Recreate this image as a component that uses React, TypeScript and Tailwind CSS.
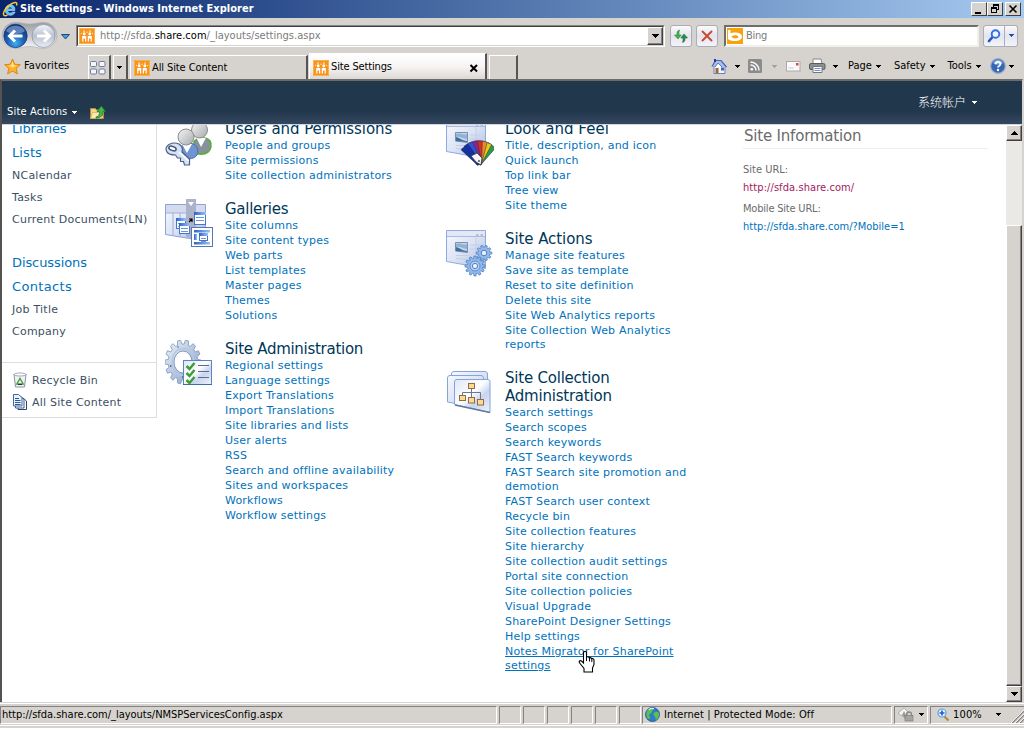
import React from 'react';

type Box = { className?: string };

const ui = "font-['DejaVu_Sans_Condensed','DejaVu_Sans',sans-serif] [font-stretch:condensed] whitespace-nowrap";
const bevel = 'bg-[#d6d3ce] border border-t-white border-l-white border-r-[#404040] border-b-[#404040]';
const sunken = 'border border-t-[#848284] border-l-[#848284] border-r-white border-b-white';

function Caret({ className = 'text-black' }: Box) {
  return (
    <svg width="5" height="3" viewBox="0 0 5 3" shapeRendering="crispEdges" className={'shrink-0 ' + className}>
      <path d="M0 0h5v1H4v1H3v1H2V2H1V1H0z" fill="currentColor" />
    </svg>
  );
}

function SiteLogo() {
  return (
    <svg width="16" height="16" viewBox="0 0 16 16" className="shrink-0">
      <rect width="16" height="16" rx="1" fill="#f7941d" />
      <rect x=".5" y=".5" width="15" height="15" rx="1" fill="none" stroke="#ffb04a" />
      <circle cx="5.200" cy="6" r="1.400" fill="#fff" />
      <circle cx="10.800" cy="6" r="1.400" fill="#fff" />
      <path d="M3.200 8h4v5.500H6v-3H4.400v3H3.200zM8.800 8h4v5.500h-1.200v-3H10v3H8.800z" fill="#fff" />
      <path d="M5 2v1.500M8 3.500v1.500M11 2v1.500M2 5.500h1M13 5.500h1M4 4h2M10 4h2" stroke="#ffe9c6" />
    </svg>
  );
}

function TitleBar() {
  return (
    <div className="flex h-[18px] w-full items-center bg-linear-to-r from-[#0a246a] to-[#a6caf0] pl-[2px] pr-[3px]">
      <svg width="16" height="16" viewBox="0 0 16 16" className="shrink-0">
        <path d="M12.800 9.500H5.600c.2 1.700 1.400 2.600 2.900 2.600 1 0 1.700-.4 2.100-1h2.500c-.7 2-2.400 3.200-4.700 3.200-3 0-5.200-2.100-5.200-5.200s2.200-5.300 5.200-5.300c3.200 0 4.900 2.500 4.400 5.700zM5.700 7.900h4.800c-.2-1.300-1.100-2-2.300-2-1.300 0-2.200.7-2.500 2z" fill="#55bdf5" stroke="#bfe9ff" strokeWidth=".6" />
        <path d="M14.500 4.500c.8-2.200.1-3.400-1.800-3C9.500 2 4.500 6 2.300 10c-1.300 2.500-1.100 4.600.6 4.800 1 .1 1.700-.2 2.600-.8" fill="none" stroke="#ffc92e" strokeWidth="1.500" />
      </svg>
      <span className={ui + ' ml-[2px] pt-px text-[11px] font-bold tracking-[0.02px] text-white'}>Site Settings - Windows Internet Explorer</span>
      <div className="ml-auto flex">
        <div className={bevel + ' h-[14px] w-4'}>
          <svg width="14" height="12" shapeRendering="crispEdges"><path d="M3 9h6v2H3z" /></svg>
        </div>
        <div className={bevel + ' h-[14px] w-4'}>
          <svg width="14" height="12" shapeRendering="crispEdges"><path d="M5 1h6v6H9v3H3V4h2zM6 3v1h3v2h1V3zM4 6v3h4V6z" fillRule="evenodd" /></svg>
        </div>
        <div className={bevel + ' ml-[2px] h-[14px] w-4'}>
          <svg width="14" height="12"><path d="M3.500 2.500l7 7M10.500 2.500l-7 7" stroke="#000" strokeWidth="1.600" /></svg>
        </div>
      </div>
    </div>
  );
}

function NavButtons() {
  return (
    <svg width="72" height="32" viewBox="0 0 72 32" className="shrink-0">
      <defs>
        <radialGradient id="nb" cx=".5" cy=".8" r=".8"><stop offset="0" stopColor="#3fb0f5" /><stop offset=".45" stopColor="#1f5fae" /><stop offset="1" stopColor="#0e2f76" /></radialGradient>
        <linearGradient id="nf" x1="0" y1="0" x2="0" y2="1"><stop offset="0" stopColor="#f2f5fa" /><stop offset=".5" stopColor="#b9c1d0" /><stop offset="1" stopColor="#e9eef5" /></linearGradient>
        <linearGradient id="nt" x1="0" y1="0" x2="0" y2="1"><stop offset="0" stopColor="#9a9ca3" /><stop offset="1" stopColor="#f5f5f5" /></linearGradient>
      </defs>
      <path d="M15 2.500C22 2.500 24 4 29.500 4S38 2.500 44 2.500a13 13 0 0 1 0 26c-6 0-9-2-14.500-2s-8 2-14.500 2a13 13 0 0 1 0-26z" fill="url(#nt)" stroke="#adadb3" strokeWidth=".7" />
      <circle cx="15.500" cy="16" r="11.700" fill="url(#nb)" stroke="#17377b" strokeWidth=".7" />
      <path d="M6 11c3-7 16-7 19 0-5 4-14 4-19 0z" fill="#7796cb" opacity=".75" />
      <path d="M22.500 16H10M15 10.500L9.500 16l5.500 5.500" fill="none" stroke="#fff" strokeWidth="3" />
      <circle cx="43.500" cy="16" r="11.500" fill="url(#nf)" stroke="#8f95a3" strokeWidth=".8" />
      <path d="M37 16h12M44 10.500l5.500 5.500-5.500 5.500" fill="none" stroke="#fff" strokeWidth="3" />
      <path d="M61.500 14.500h8l-4 4.500z" fill="#4a9cd6" stroke="#123c7a" strokeWidth=".9" />
    </svg>
  );
}

const navBtn = 'flex h-[22px] items-center justify-center rounded-[3px] border border-[#a9adb9] bg-linear-to-b from-[#fafafc] via-[#e3e4ee] to-[#f4f5fa]';

function AddressRow() {
  return (
    <div className="flex h-[35px] w-full items-center">
      <NavButtons />
      <div className="ml-[4px] flex h-[22px] w-[589px] border border-t-[#848284] border-l-[#848284] border-r-white border-b-white">
        <div className="flex flex-1 items-center border border-t-[#404040] border-l-[#404040] border-r-[#d6d3ce] border-b-[#d6d3ce] bg-white pl-px">
          <SiteLogo />
          <span className={ui + ' ml-[5px] pt-[2px] text-[11px] tracking-[0.02px] text-[#7b7b7b]'}>
            http://sfda.<span className="text-black">share.com</span>/_layouts/settings.aspx
          </span>
          <div className={bevel + ' ml-auto flex h-[18px] w-4 items-center justify-center shadow-[inset_-1px_-1px_0_#848284]'}>
            <svg width="7" height="4" shapeRendering="crispEdges"><path d="M0 0h7v1H6v1H5v1H4v1H3V3H2V2H1V1H0z" /></svg>
          </div>
        </div>
      </div>
      <div className={navBtn + ' ml-[5px] w-[22px]'}>
        <svg width="16" height="16" viewBox="0 0 16 16">
          <path d="M6.500 2C4 2.500 3.800 4.500 4 7H1.500L5 11l3.200-4H6c-.2-2 0-3.500.5-5z" fill="#42b24a" stroke="#1f7a2d" strokeWidth=".5" />
          <path d="M9.500 14.500c2.500-.5 2.700-2.500 2.500-4.500h2.500L11 6 7.800 10H10c.2 1.800 0 3-.5 4.500z" fill="#2c8f3a" stroke="#155f50" strokeWidth=".5" />
        </svg>
      </div>
      <div className={navBtn + ' ml-1 w-[22px]'}>
        <svg width="14" height="14" viewBox="0 0 14 14"><path d="M2.500 2.500l9 9M11.500 2.500l-9 9" stroke="#c94a35" strokeWidth="2" strokeLinecap="round" /></svg>
      </div>
      <div className="ml-[6px] flex h-[22px] w-[255px] items-center border-2 border-t-[#6d6d6d] border-l-[#6d6d6d] border-r-[#f0efec] border-b-[#f0efec] bg-white">
        <svg width="16" height="16" viewBox="0 0 16 16" className="ml-px shrink-0">
          <rect width="16" height="16" fill="#f7a30c" />
          <path d="M1 2h2.500v3.500C6 3.700 15 4 15 8.800S5 14.500 1 11zM4.500 8.800c1 2.200 7 2 7 0s-6-2.300-7 0z" fill="#fff" fillRule="evenodd" />
        </svg>
        <span className={ui + ' ml-[3px] pt-[2px] text-[11px] tracking-[-0.3px] text-[#7b7b7b]'}>Bing</span>
      </div>
      <div className={navBtn + ' ml-1 w-[22px] rounded-r-none'}>
        <svg width="16" height="16" viewBox="0 0 16 16">
          <path d="M7 8.500L3 13" stroke="#2453c0" strokeWidth="2.600" strokeLinecap="round" />
          <circle cx="9.500" cy="6" r="3.800" fill="#eaf4ff" stroke="#2f6fe0" strokeWidth="1.900" />
        </svg>
      </div>
      <div className={navBtn + ' w-[13px] rounded-l-none border-l-0'}><Caret className="text-[#1f4fb0]" /></div>
    </div>
  );
}

function ToolItem({ label, className }: { label: string; className: string }) {
  return (
    <div className={'flex items-center gap-1 ' + className}>
      <span className={ui + ' text-[11px] text-black'}>{label}</span>
      <Caret />
    </div>
  );
}

function TabRow() {
  return (
    <div className="flex h-[26px] w-full items-end">
      <div className="flex h-[26px] w-[88px] items-center pl-1">
        <svg width="17" height="17" viewBox="0 0 17 17">
          <path d="M8.500 1l2.200 5.200 5.600.5-4.200 3.700 1.300 5.500-4.900-2.900-4.900 2.900 1.300-5.500L.7 6.700l5.600-.5z" fill="#ffb42c" stroke="#e17c0a" strokeWidth=".9" />
          <path d="M8.500 3.500l1.500 3.700 3 .4-4.500 1.800-4-1.900 2.800-.3z" fill="#ffe58a" />
        </svg>
        <span className={ui + ' ml-[3px] text-[11px] tracking-[0.08px] text-black'}>Favorites</span>
      </div>
      <div className="flex h-6 w-[23px] items-center justify-center border-l border-t border-r-2 border-l-white border-t-white border-r-[#555] pr-[2px]">
        <svg width="16" height="14" viewBox="0 0 16 14" fill="#f4f6fb" stroke="#6f7b9b">
          <rect x=".5" y=".5" width="6" height="5" rx="1" /><rect x="9" y=".5" width="6" height="5" rx="1" />
          <rect x=".5" y="8" width="6" height="5" rx="1" /><rect x="9" y="8" width="6" height="5" rx="1" />
        </svg>
      </div>
      <div className="ml-[2px] flex h-6 w-[15px] items-center justify-center border-l border-t border-r-2 border-l-white border-t-white border-r-[#555] pr-[2px]"><Caret /></div>
      <div className="ml-[2px] flex h-6 w-[178px] items-center border-l border-t border-r-2 border-l-white border-t-white border-r-[#555] pl-[3px] pt-px">
        <SiteLogo />
        <span className={ui + ' ml-[2px] pt-px text-[11px] tracking-[-0.1px] text-black'}>All Site Content</span>
      </div>
      <div className="ml-px flex h-[26px] w-[178px] items-center border-l border-t border-r-2 border-l-white border-t-white border-r-[#555] bg-linear-to-b from-white via-[#f7f4f4] to-[#dcd8d4] pl-[3px] pr-[6px] pt-[2px]">
        <SiteLogo />
        <span className={ui + ' ml-[2px] text-[11px] tracking-[-0.15px] text-black'}>Site Settings</span>
        <svg width="10" height="10" viewBox="0 0 10 10" className="ml-auto"><path d="M1.500 2l6.500 6.500M8 2L1.500 8.500" stroke="#000" strokeWidth="2" /></svg>
      </div>
      <div className="ml-[2px] h-6 w-[29px] border-l border-t border-r-2 border-l-white border-t-white border-r-[#555]" />
      <div className="flex h-[26px] flex-1 items-center pl-[193px]">
        <svg width="17" height="17" viewBox="0 0 17 17">
          <path d="M3 8h11v7.500H3z" fill="#f4f4fb" stroke="#6c7fae" />
          <path d="M1 8.500L4.500 2.500h5.500L15.500 9" fill="#a8bde8" stroke="#4464b0" strokeWidth="1.200" />
          <path d="M3 1h2v3H3z" fill="#2338a8" />
          <path d="M4 9l3-4 4 4" fill="#fff" stroke="#5f78b8" />
          <rect x="4.500" y="10" width="3" height="5" fill="#9b6a3a" /><rect x="10" y="9.500" width="3" height="3" fill="#3d63c4" />
        </svg>
        <div className="ml-[7px]"><Caret /></div>
        <svg width="14" height="14" viewBox="0 0 14 14" className="ml-[8px]">
          <rect width="14" height="14" rx="1.500" fill="#8b8b8b" />
          <circle cx="3.800" cy="10.300" r="1.300" fill="#fff" />
          <path d="M2.500 6a5.500 5.500 0 0 1 5.500 5.500M2.500 3a8.500 8.500 0 0 1 8.500 8.500" fill="none" stroke="#fff" strokeWidth="1.400" />
        </svg>
        <div className="ml-[10px]"><Caret className="text-[#a3a09a]" /></div>
        <svg width="15" height="11" viewBox="0 0 15 11" className="ml-[9px]">
          <rect x=".5" y=".5" width="13.500" height="9.500" fill="#fafafa" stroke="#a9a9ad" /><path d="M2.500 7h5" stroke="#c7c7cc" /><rect x="10" y="2" width="2.500" height="2.500" fill="#d9493b" />
        </svg>
        <svg width="17" height="16" viewBox="0 0 17 16" className="ml-[8px]">
          <path d="M4 1h8l1 5H4z" fill="#fff" stroke="#888" />
          <rect x=".5" y="5.500" width="15.500" height="6" rx="1.500" fill="#8b8e94" stroke="#585c63" />
          <path d="M4 8.500h9V14.500H4z" fill="#fff" stroke="#777" /><path d="M5.500 10.500h6M5.500 12.500h6" stroke="#6d91cf" />
        </svg>
        <div className="ml-[7px]"><Caret /></div>
        <ToolItem label="Page" className="ml-[10px]" />
        <ToolItem label="Safety" className="ml-[13px]" />
        <ToolItem label="Tools" className="ml-[13px]" />
        <svg width="16" height="16" viewBox="0 0 16 16" className="ml-[9px]">
          <circle cx="8" cy="8" r="7.400" fill="#3567b5" stroke="#a3b1cc" strokeWidth="1.200" />
          <path d="M3 5c2-4 8-4 10 0-2 2-8 2-10 0z" fill="#89aede" />
          <path d="M5.700 6.200c0-3 4.800-3 4.800-.2C10.500 7.800 8 7.600 8 9.600" fill="none" stroke="#fff" strokeWidth="1.800" /><circle cx="8" cy="12" r="1.200" fill="#fff" />
        </svg>
        <div className="ml-[3px]"><Caret /></div>
      </div>
    </div>
  );
}

function Ribbon() {
  return (
    <div className="flex h-[44px] shrink-0 border-b border-[#cdd5e0] bg-linear-to-b from-[#21374c] from-70% to-[#35475f]">
      <div className="flex w-[400px] items-center pl-[5px] pt-[20px]">
        <span className={ui + ' text-[11px] tracking-[0.18px] text-white'}>Site Actions</span>
        <div className="ml-[5px]"><Caret className="text-white" /></div>
        <svg width="16" height="15" viewBox="0 0 16 15" className="ml-[13px]">
          <path d="M.5 3.500h5l1 1.500h7v8.500H.5z" fill="#f3d68a" stroke="#b08b3c" />
          <path d="M.5 13.500l2-6h11l-2 6z" fill="#fbe9b4" stroke="#c9a24f" strokeWidth=".6" />
          <path d="M6 12c3-.5 3.500-2.500 3.500-5.500H7L11.300 1l4.200 5.500H13c0 4-2 6.500-7 6.500z" fill="#45b549" stroke="#1e7a2c" strokeWidth=".8" />
        </svg>
      </div>
      <div className="ml-auto flex items-center gap-[6px] pr-[45px] text-white">
        <span className="-mt-[2px] font-['Noto_Sans_CJK_SC',sans-serif] text-[12px] font-light">系统帐户</span>
        <Caret className="text-white" />
      </div>
    </div>
  );
}

const verdana = "font-['DejaVu_Sans',sans-serif]";

function NavHead({ children, className }: { children: string; className: string }) {
  return <div className={'flex items-center text-[13px] text-[#0072bc] ' + className}>{children}</div>;
}

function NavItem({ children }: { children: string }) {
  return <div className="flex h-[22px] items-center whitespace-nowrap text-[11px] tracking-[0.24px]">{children}</div>;
}

function SideNav() {
  return (
    <nav className={verdana + ' flex h-[293px] w-[155px] shrink-0 flex-col border-b border-r border-[#dbddde] text-[#3b4f65]'}>
      <div className="flex h-[237px] flex-col pl-[10px]">
        <NavHead className="-mt-[8px] h-6 tracking-[-0.2px]">Libraries</NavHead>
        <NavHead className="h-6 tracking-[0.1px]">Lists</NavHead>
        <NavItem>NCalendar</NavItem>
        <NavItem>Tasks</NavItem>
        <NavItem>Current Documents(LN)</NavItem>
        <NavHead className="mt-5 h-6 tracking-[-0.1px]">Discussions</NavHead>
        <NavHead className="h-6 tracking-[0.35px]">Contacts</NavHead>
        <NavItem>Job Title</NavItem>
        <NavItem>Company</NavItem>
      </div>
      <div className="flex flex-col border-t border-[#dbddde] pl-[10px] pt-[7px]">
        <div className="flex items-center gap-[4px]">
          <svg width="16" height="16" viewBox="0 0 16 16" className="-mt-[2px]">
            <path d="M2 2.500h12l-1.500 12.500h-9z" fill="#eef2f7" stroke="#8994a8" />
            <ellipse cx="8" cy="2.500" rx="6" ry="1.500" fill="#fff" stroke="#8994a8" strokeWidth=".8" />
            <path d="M8 6.500l3.200 5.500H4.800z" fill="none" stroke="#4f9a45" strokeWidth="1.400" /><path d="M6 12.500h4" stroke="#1f3c2a" />
          </svg>
          <NavItem>Recycle Bin</NavItem>
        </div>
        <div className="flex items-center gap-[4px]">
          <svg width="16" height="16" viewBox="0 0 16 16" className="-mt-[2px]">
            <path d="M6 4h5l3.500 3v8.500H6z" fill="#fff" stroke="#2d456f" />
            <path d="M3.500 2.500h5L12 5.500V14H3.500z" fill="#fff" stroke="#3f5d8c" />
            <path d="M1.500.5h5l3.500 3V12H1.500z" fill="#e9f1fc" stroke="#3f68a8" />
            <path d="M3 4.500h4M3 6.500h5.500M3 8.500h5.500M3 10.500h5.500" stroke="#2f558f" />
          </svg>
          <NavItem>All Site Content</NavItem>
        </div>
      </div>
    </nav>
  );
}

function IconDefs() {
  return (
    <svg width="0" height="0" className="absolute">
      <defs>
        <linearGradient id="pane" x1="0" y1="0" x2="1" y2="1"><stop offset="0" stopColor="#f6f9fe" /><stop offset=".5" stopColor="#dbe3f4" /><stop offset="1" stopColor="#a9b9dc" /></linearGradient>
        <linearGradient id="sheen" x1="0" y1="0" x2="1" y2="1"><stop offset="0" stopColor="#dfe6f6" /><stop offset=".45" stopColor="#ffffff" /><stop offset=".65" stopColor="#c9d5ee" /><stop offset="1" stopColor="#eef2fb" /></linearGradient>
        <linearGradient id="grey" x1="0" y1="0" x2="1" y2="1"><stop offset="0" stopColor="#f5f5f5" /><stop offset="1" stopColor="#a9aaac" /></linearGradient>
        <linearGradient id="gear" x1="0" y1="0" x2="1" y2="1"><stop offset="0" stopColor="#eef3fa" /><stop offset="1" stopColor="#7e9bc9" /></linearGradient>
        <linearGradient id="blue" x1="0" y1="0" x2="1" y2="0"><stop offset="0" stopColor="#2a63cf" /><stop offset="1" stopColor="#9dc2f4" /></linearGradient>
      </defs>
    </svg>
  );
}

function UsersIcon() {
  return (
    <svg width="48" height="48" viewBox="0 0 48 48">
      <path d="M29 22c3-5 12-6 16-1 2 3 1 9-2 11-4 3-10 3-14 0z" fill="#87919c" stroke="#54ae35" strokeWidth="1.600" />
      <path d="M31 17l5 10 5-9z" fill="#fff" />
      <circle cx="34.500" cy="10" r="8" fill="url(#grey)" stroke="#8b8c8e" />
      <path d="M15 29c2-6 12-8 16-3 3 4 2 9-1 11-4 3-11 2-15-1z" fill="#6e94d2" stroke="#476eaf" />
      <path d="M17 24l5 9 5-9z" fill="#fff" />
      <circle cx="21" cy="17" r="8" fill="url(#grey)" stroke="#8b8c8e" />
      <path d="M1.500 27c2-4 8-5 12.500-3 3 2 4 5 3 8l7.500 7v6h-5l-1-3.500h-3V38h-3l-2-3c-4 0-8-1-9-4-.5-1-.5-3 0-4z" fill="#d5e2f6" stroke="#4d6084" strokeWidth="1.200" />
      <path d="M14 32l9.500 9" stroke="#fff" strokeWidth="1.500" />
      <ellipse cx="7.500" cy="28.500" rx="3.800" ry="2" fill="#fff" stroke="#405374" strokeWidth="1.500" transform="rotate(20 7.500 28.500)" />
    </svg>
  );
}

function MiniPage({ x, y, w = 12, h = 12 }: { x: number; y: number; w?: number; h?: number }) {
  return (
    <g>
      <rect x={x + 0.5} y={y + 0.5} width={w - 1} height={h - 1} fill="#fff" stroke="#4577c9" />
      <rect x={x} y={y} width={w} height="3" fill="url(#blue)" />
      <path d={`M${x + 2} ${y + 5.5}h${w - 4}M${x + 2} ${y + 8.5}h${w - 4}`} stroke="#6b93d8" />
    </g>
  );
}

function GalleriesIcon() {
  return (
    <svg width="48" height="49" viewBox="0 -1 48 49" className="-mt-[1px]">
      <path d="M.500 4.500h40v35h-10L.5 34.500z" fill="url(#pane)" stroke="#8ea3d8" />
      <path d="M1 5h39v8H1z" fill="#d5dbee" /><path d="M8 13v22M15 13v24M1 13h39" stroke="#9eafd6" />
      <path d="M21-1h10v40l-10-2z" fill="#abb2c9" /><path d="M23 2h6l-3 4z" fill="#fff" />
      <MiniPage x={11} y={18} w={10} h={11} /><MiniPage x={14} y={23} w={11} h={11} /><MiniPage x={29} y={12} w={12} h={13} />
      <path d="M24 22l3-3m-3 0h3v3" stroke="#000" strokeWidth="1.200" fill="none" />
      <rect x="26.500" y="27.500" width="21" height="19" fill="#fff" stroke="#5575b5" />
      <rect x="29" y="30" width="16" height="2.500" fill="url(#blue)" /><rect x="29" y="42" width="16" height="2.500" fill="url(#blue)" /><rect x="29" y="34" width="3" height="6" fill="url(#blue)" />
      <MiniPage x={34} y={33} w={9} h={8} />
    </svg>
  );
}

function cog(cx: number, cy: number, r: number, n: number, d: number) {
  const pts: string[] = [];
  for (let i = 0; i < n; i++) {
    [[-0.32, r - d], [-0.2, r], [0.2, r], [0.32, r - d]].forEach(([o, q]) => {
      const a = ((i + o) / n) * Math.PI * 2;
      pts.push(`${(cx + Math.cos(a) * q).toFixed(2)},${(cy + Math.sin(a) * q).toFixed(2)}`);
    });
  }
  return pts.join(' ');
}

function AdminIcon() {
  return (
    <svg width="48" height="48" viewBox="0 0 48 48">
      <g transform="translate(18 22) scale(.82 1)">
        <polygon points={cog(0, 0, 22, 14, 4)} fill="url(#gear)" stroke="#8a9dbd" />
        <circle r="11" fill="#fff" stroke="#7b90b6" /><circle r="13.500" fill="none" stroke="#b7c6de" strokeWidth="1.500" />
        <circle cx="-15" cy="4" r="1" fill="#445f90" /><circle cx="-6" cy="-15" r="1" fill="#7389b5" /><circle cx="0" cy="15" r="1" fill="#2b4a80" />
      </g>
      <rect x="18.500" y="20.500" width="28" height="24" fill="url(#sheen)" stroke="#5c84bf" /><path d="M18 44.500h29" stroke="#3e69aa" />
      <path d="M21.500 26l3 3 5-6M21.500 33l3 3 5-6M21.500 40l3 3 5-6" fill="none" stroke="#3f9d37" strokeWidth="2.500" />
      <path d="M33 25.500h11M33 31.500h11M33 37.500h11" stroke="#5b6e91" />
    </svg>
  );
}

function WindowPane() {
  return (
    <g>
      <path d="M.5.500h39v38L.5 31.500z" fill="url(#pane)" stroke="#8ea9e4" />
      <path d="M1 1h38v5H1z" fill="#e4e8f4" /><path d="M1 6.500h38" stroke="#aebbdc" />
      <path d="M30 5h2.500M34.500 5h2.500" stroke="#8f98b0" />
      <path d="M9.500 12.500h12v10l-12-1.500z" fill="#c5d4e6" stroke="#7c8fb2" /><path d="M10 17c4 1 7 4 11 4v1l-11-1z" fill="#3f6f9d" /><path d="M10 14c4-2 8 2 11 0v5c-4 0-7-3-11-2z" fill="#8fb4d2" />
      <path d="M24 15h10M24 19h10M10 25.500h12M10 28.500l14 1" stroke="#c3cee6" /><path d="M30 7v28" stroke="#c3cee6" />
    </g>
  );
}

function LookIcon() {
  const fan = ['#2e9c3d', '#e9c81d', '#ee8a1d', '#d6301f', '#8f2587', '#2e53d6', '#15309c'];
  return (
    <svg width="48" height="48" viewBox="0 0 48 48">
      <WindowPane />
      {fan.map((c, i) => (
        <path key={c} d="M-4.500-22h9L2.500 1h-5z" fill={c} stroke="#26305a" strokeWidth=".5" transform={`translate(33 43) rotate(${36 - i * 13})`} />
      ))}
      <path d="M25 36l6-3 5 5-1 7-5-3z" fill="#f5f5f7" stroke="#333" strokeWidth=".8" /><circle cx="33" cy="41" r="1" fill="#555" />
    </svg>
  );
}

function ActionsIcon() {
  return (
    <svg width="48" height="48" viewBox="0 0 48 48">
      <WindowPane />
      <polygon points={cog(38, 23, 7.8, 10, 2)} fill="#94b9e8" stroke="#4b7ec6" strokeWidth=".8" />
      <circle cx="38" cy="23" r="2.800" fill="#e8f0fb" stroke="#4b7ec6" />
      <polygon points={cog(29, 36, 10, 12, 2.4)} fill="#94b9e8" stroke="#4b7ec6" strokeWidth=".8" />
      <circle cx="29" cy="36" r="5" fill="#b7d1f2" stroke="#5b8cd0" /><circle cx="29" cy="36" r="2.600" fill="#f2f7fd" stroke="#4b7ec6" />
    </svg>
  );
}

function CollectionIcon() {
  return (
    <svg width="48" height="48" viewBox="0 -1 48 48">
      <g fill="url(#pane)" stroke="#86a3dc">
        <path d="M5.500 4c0-1.500 1-2.500 2.500-2.500h31c1.500 0 2.500 1 2.500 2.500v32l-36-7z" />
        <path d="M1.500 8C1.500 6.500 2.500 5.500 4 5.500h31c1.500 0 2.500 1 2.500 2.500v31l-36-7z" />
        <path d="M8.500 12c0-1.500 1-2.500 2.500-2.500h31c1.500 0 2 1 2 2.500v30.500l-35.500-8z" fill="url(#sheen)" />
      </g>
      <path d="M9 35l35 7.500" stroke="#62799f" strokeWidth="1.300" />
      <path d="M25.500 18v10M16.500 28v-5.500h18V31" fill="none" stroke="#6b7894" />
      <g fill="#ffd894" stroke="#8e6d42">
        <rect x="22.500" y="13.500" width="6" height="5" /><rect x="13.500" y="25.500" width="6" height="5" /><rect x="22.500" y="27.500" width="6" height="5.500" /><rect x="31.500" y="29.500" width="6" height="5.500" />
      </g>
    </svg>
  );
}

type SectionProps = { title: string; links: string[]; icon: React.ReactNode; active?: string; titleClass?: string };

function Section({ title, links, icon, active, titleClass = 'tracking-[-0.28px]' }: SectionProps) {
  return (
    <section className={verdana + ' mb-[17px] flex'}>
      <div className="w-[60px] shrink-0">{icon}</div>
      <div className="w-[190px]">
        <h2 className={'text-[15px] leading-[18px] text-[#003759] ' + titleClass}>{title}</h2>
        <ul className="relative top-px">
          {links.map((l) => (
            <li key={l} className={'pb-px text-[11px] leading-[14px] tracking-[0.2px] text-[#0072bc] ' + (l === active ? 'underline underline-offset-1' : '')}>{l}</li>
          ))}
        </ul>
      </div>
    </section>
  );
}

const galleries = ['Site columns', 'Site content types', 'Web parts', 'List templates', 'Master pages', 'Themes', 'Solutions'];
const admin = ['Regional settings', 'Language settings', 'Export Translations', 'Import Translations', 'Site libraries and lists', 'User alerts', 'RSS', 'Search and offline availability', 'Sites and workspaces', 'Workflows', 'Workflow settings'];
const actions = ['Manage site features', 'Save site as template', 'Reset to site definition', 'Delete this site', 'Site Web Analytics reports', 'Site Collection Web Analytics reports'];
const collection = ['Search settings', 'Search scopes', 'Search keywords', 'FAST Search keywords', 'FAST Search site promotion and demotion', 'FAST Search user context', 'Recycle bin', 'Site collection features', 'Site hierarchy', 'Site collection audit settings', 'Portal site connection', 'Site collection policies', 'Visual Upgrade', 'SharePoint Designer Settings', 'Help settings', 'Notes Migrator for SharePoint settings'];

function SiteInfo() {
  return (
    <aside className="ml-[17px] w-[245px] text-[11px]">
      <h2 className={verdana + ' flex h-[24px] items-center whitespace-nowrap border-b border-[#ededed] pb-px pl-px text-[15px] tracking-[-0.2px] text-[#6b6b6b]'}>Site Information</h2>
      <div className={ui}>
        <div className="mt-[12px] leading-[18px] text-[#6b6b6b]">Site URL:</div>
        <div className="leading-[18px] tracking-[0.08px] text-[#a3195b]">http://sfda.share.com/</div>
        <div className="mt-[3px] leading-[18px] tracking-[-0.2px] text-[#6b6b6b]">Mobile Site URL:</div>
        <div className="leading-[18px] text-[#0072bc]">http://sfda.share.com/?Mobile=1</div>
      </div>
    </aside>
  );
}

function ScrollBar() {
  const btn = bevel + ' flex h-4 w-4 shrink-0 items-center justify-center shadow-[inset_-1px_-1px_0_#848284]';
  return (
    <div className="ml-auto flex w-4 shrink-0 flex-col bg-[#eae9e6]">
      <div className={btn}><svg width="7" height="4" shapeRendering="crispEdges"><path d="M3 0h1v1h1v1h1v1h1v1H0V3h1V2h1V1h1z" /></svg></div>
      <div className="h-[84px]" />
      <div className={bevel + ' w-4 flex-1 shadow-[inset_-1px_-1px_0_#848284]'} />
      <div className={btn}><svg width="7" height="4" shapeRendering="crispEdges"><path d="M0 0h7v1H6v1H5v1H4v1H3V3H2V2H1V1H0z" /></svg></div>
    </div>
  );
}

function StatusBar() {
  return (
    <div className="flex h-[26px] w-full flex-col border-b-[3px] border-[#d6d3ce] bg-[#d6d3ce]">
      <div className="mt-px h-px bg-white" />
      <div className="mt-[2px] flex h-[18px]">
        <div className={sunken + ' flex w-[497px] items-center'}>
          <span className={ui + ' pl-px pt-[2px] text-[11px] tracking-[-0.02px] text-black'}>http://sfda.share.com/_layouts/NMSPServicesConfig.aspx</span>
        </div>
        {[0, 1, 2, 3, 4, 5].map((i) => <div key={i} className={sunken + ' ml-[2px] w-[22px]'} />)}
        <div className={sunken + ' ml-px flex w-[250px] items-center pl-[2px]'}>
          <svg width="15" height="15" viewBox="0 0 15 15">
            <circle cx="7.500" cy="7.500" r="7" fill="#2e7cc9" stroke="#1c4c8c" strokeWidth=".8" />
            <path d="M2 4c2-3 5-3.500 6-2.500S7 4 6.500 5.500 3 7 4.500 9 5 12 3.500 12 .5 7 2 4zM9 6c2-2 4-1 5 0 .5 3-1 6-3 7-1-1 0-3-1.500-4S8 7 9 6z" fill="#5cc04f" />
            <path d="M4 3c1-1.500 3-2 5-1.300" stroke="#d4efff" strokeWidth="1.300" fill="none" />
          </svg>
          <span className={ui + ' ml-[4px] pt-[2px] text-[11px] tracking-[0.08px] text-black'}>Internet | Protected Mode: Off</span>
        </div>
        <div className={sunken + ' ml-[2px] flex w-[34px] items-center pl-[2px]'}>
          <svg width="17" height="15" viewBox="0 0 17 15">
            <path d="M1 6l6-5 4 4-1 4H5z" fill="#f4f4f4" stroke="#b0b0b0" /><path d="M5 8l2-4 2 4-1 4z" fill="#9b9b9b" />
            <path d="M9.500 9V7.500a2.500 2.500 0 0 1 5 0V9" fill="none" stroke="#8a8a8a" strokeWidth="1.300" /><rect x="8" y="8.500" width="8" height="5.500" fill="#a4a4a4" stroke="#777" strokeWidth=".6" />
          </svg>
          <div className="ml-[5px]"><Caret /></div>
        </div>
        <div className={sunken + ' ml-[2px] flex flex-1 items-center border-r-0 pl-[6px]'}>
          <svg width="13" height="14" viewBox="0 0 13 14">
            <path d="M7.500 8.500l4 4" stroke="#b98a45" strokeWidth="2.400" /><circle cx="5" cy="5" r="4" fill="#eaf5ff" stroke="#58a0e4" strokeWidth="1.200" /><path d="M2.500 5h5M5 2.500v5" stroke="#1f5fc4" strokeWidth="1.700" />
          </svg>
          <span className={ui + ' ml-[3px] pt-[2px] text-[11px] tracking-[0.15px] text-black'}>100%</span>
          <div className="ml-[14px]"><Caret /></div>
          <svg width="14" height="15" viewBox="0 0 14 15" className="ml-auto self-end"><path d="M2 15L14 3M6 15l8-8M10 15l4-4" stroke="#848284" strokeWidth="1.500" /><path d="M1 15L14 2M5 15l9-9M9 15l5-5" stroke="#fff" strokeWidth=".8" /></svg>
        </div>
      </div>
      <div className="mt-px h-px bg-white" />
    </div>
  );
}

function HandCursor() {
  return (
    <svg width="18" height="23" viewBox="0 0 18 23" className="absolute left-[578px] top-[651px]">
      <path d="M6.500.500h1c.6 0 1 .4 1 1v4.500c1-.6 2.200-.3 2.500.5 1-.3 2 0 2.300 1 1-.3 2.700.2 2.700 1.500v4.500l-1.500 3.500v4H6v-3.500L2 12.500c-.8-1-1-2-.5-2.500s1.500-.5 2.500.5L5.500 12V1.500c0-.6.4-1 1-1z" fill="#fff" stroke="#000" strokeWidth="1.100" />
      <path d="M8.500 6v4M11.500 7v3.500M13.800 8v3" stroke="#000" />
    </svg>
  );
}

export default function App() {
  return (
    <div className="relative h-[732px] w-[1032px] overflow-hidden bg-white">
      <IconDefs />
      <div className="flex h-[728px] w-[1024px] flex-col bg-[#d6d3ce]">
        <TitleBar />
        <AddressRow />
        <TabRow />
        <div className="flex h-[623px] w-[1023px] flex-col border-l-2 border-t-2 border-r border-l-[#55534f] border-t-[#6e6c69] border-r-[#d6d3ce] bg-white">
          <Ribbon />
          <div className="flex h-[577px] overflow-hidden">
            <SideNav />
            <div className="-mt-[5px] ml-[8px] flex">
              <div className="w-[281px]">
                <Section title="Users and Permissions" titleClass="tracking-[-0.06px]" links={['People and groups', 'Site permissions', 'Site collection administrators']} icon={<UsersIcon />} />
                <Section title="Galleries" links={galleries} icon={<GalleriesIcon />} />
                <Section title="Site Administration" links={admin} icon={<AdminIcon />} />
              </div>
              <div className="-ml-px w-[281px]">
                <Section title="Look and Feel" titleClass="tracking-[0.05px]" links={['Title, description, and icon', 'Quick launch', 'Top link bar', 'Tree view', 'Site theme']} icon={<div className="pl-px"><LookIcon /></div>} />
                <Section title="Site Actions" titleClass="tracking-[-0.08px]" links={actions} icon={<div className="pl-px"><ActionsIcon /></div>} />
                <Section title="Site Collection Administration" titleClass="tracking-[-0.22px]" links={collection} icon={<div className="pl-px"><CollectionIcon /></div>} active="Notes Migrator for SharePoint settings" />
              </div>
            </div>
            <SiteInfo />
            <ScrollBar />
          </div>
        </div>
        <StatusBar />
      </div>
      <HandCursor />
    </div>
  );
}
